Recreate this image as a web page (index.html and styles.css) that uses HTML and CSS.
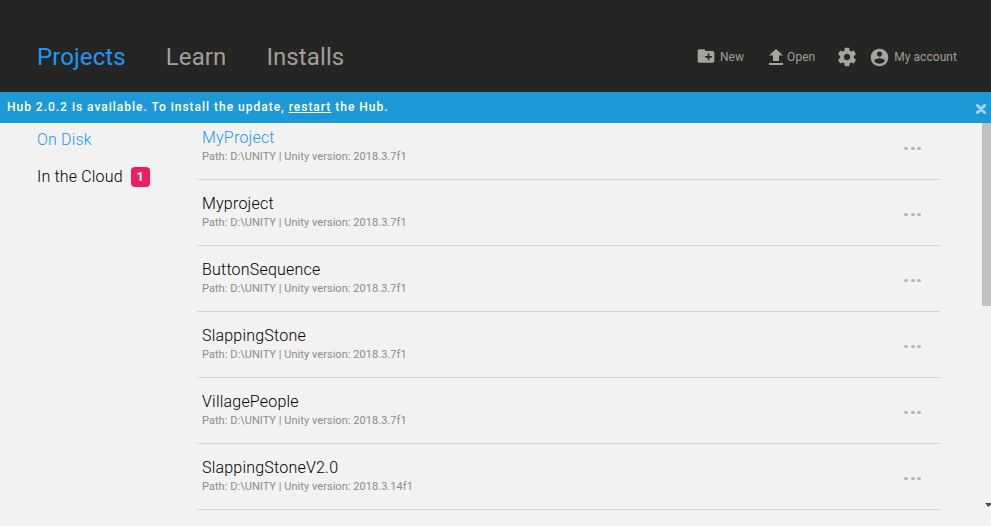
FILE: index.html
```html
<!DOCTYPE html>
<html lang="en">
<head>
<meta charset="utf-8">
<title>Unity Hub</title>
<link rel="stylesheet" href="styles.css">
</head>
<body>
<header class="topbar">
  <nav class="tabs">
    <a class="tab active">Projects</a>
    <a class="tab">Learn</a>
    <a class="tab">Installs</a>
  </nav>
  <div class="actions">
    <a class="action new"><svg width="20" height="20" viewBox="0 0 24 24"><path d="M20 6h-8l-2-2H4c-1.110 0-1.990.89-1.990 2L2 18c0 1.110.89 2 2 2h16c1.110 0 2-.89 2-2V8c0-1.110-.89-2-2-2zm-1 8h-3v3h-2v-3h-3v-2h3V9h2v3h3v2z"/></svg><span>New</span></a>
    <a class="action open"><svg width="14" height="16" viewBox="0 0 14 16"><path d="M4 12h6V6.500h4L7 0 0 6.500h4zM0 14h14v2H0z"/></svg><span>Open</span></a>
    <a class="action settings"><svg width="22" height="22" viewBox="0 0 24 24"><path d="M19.430 12.980c.04-.32.07-.64.07-.98s-.03-.66-.07-.98l2.110-1.650c.19-.15.24-.42.12-.64l-2-3.460c-.12-.22-.39-.3-.61-.22l-2.490 1c-.52-.4-1.080-.73-1.690-.98l-.38-2.650C14.460 2.180 14.250 2 14 2h-4c-.25 0-.46.18-.49.42l-.38 2.650c-.61.25-1.170.59-1.690.98l-2.490-1c-.23-.09-.49 0-.61.22l-2 3.460c-.13.22-.07.49.12.64l2.110 1.650c-.04.32-.07.65-.07.98s.03.66.07.98l-2.110 1.650c-.19.15-.24.42-.12.64l2 3.460c.12.22.39.3.61.22l2.490-1c.52.4 1.080.73 1.690.98l.38 2.650c.03.24.24.42.49.42h4c.25 0 .46-.18.49-.42l.38-2.650c.61-.25 1.170-.59 1.690-.98l2.490 1c.23.09.49 0 .61-.22l2-3.460c.12-.22.07-.49-.12-.64l-2.110-1.650zM12 15.500c-1.930 0-3.500-1.570-3.500-3.500s1.570-3.500 3.500-3.500 3.500 1.570 3.500 3.500-1.570 3.500-3.500 3.500z"/></svg></a>
    <a class="action account"><svg width="21" height="21" viewBox="0 0 24 24"><path d="M12 2C6.480 2 2 6.480 2 12s4.480 10 10 10 10-4.480 10-10S17.520 2 12 2zm0 3c1.660 0 3 1.340 3 3s-1.340 3-3 3-3-1.340-3-3 1.340-3 3-3zm0 14.200c-2.500 0-4.710-1.280-6-3.220.03-1.990 4-3.080 6-3.080 1.990 0 5.970 1.090 6 3.080-1.290 1.940-3.500 3.220-6 3.220z"/></svg><span>My account</span></a>
  </div>
</header>
<div class="banner">
  <span>Hub 2.0.2 is available. To install the update, <a class="restart">restart</a> the Hub.</span>
  <svg class="close" width="10" height="10" viewBox="0 0 10 10"><path d="M1.500 1.500l7 7M8.500 1.500l-7 7"/></svg>
</div>
<main class="content">
  <aside class="sidebar">
    <a class="side active">On Disk</a>
    <a class="side">In the Cloud<span class="badge">1</span></a>
  </aside>
  <section class="viewport">
    <div class="list">
      <article class="row"><div><h2 class="name current">MyProject</h2><p class="path">Path: D:\UNITY | Unity version: 2018.3.7f1</p></div><span class="more"><i></i><i></i><i></i></span></article>
      <article class="row"><div><h2 class="name">Myproject</h2><p class="path">Path: D:\UNITY | Unity version: 2018.3.7f1</p></div><span class="more"><i></i><i></i><i></i></span></article>
      <article class="row"><div><h2 class="name">ButtonSequence</h2><p class="path">Path: D:\UNITY | Unity version: 2018.3.7f1</p></div><span class="more"><i></i><i></i><i></i></span></article>
      <article class="row"><div><h2 class="name">SlappingStone</h2><p class="path">Path: D:\UNITY | Unity version: 2018.3.7f1</p></div><span class="more"><i></i><i></i><i></i></span></article>
      <article class="row"><div><h2 class="name">VillagePeople</h2><p class="path">Path: D:\UNITY | Unity version: 2018.3.7f1</p></div><span class="more"><i></i><i></i><i></i></span></article>
      <article class="row"><div><h2 class="name">SlappingStoneV2.0</h2><p class="path">Path: D:\UNITY | Unity version: 2018.3.14f1</p></div><span class="more"><i></i><i></i><i></i></span></article>
    </div>
  </section>
  <div class="scrollbar"><div class="thumb"></div><svg class="down" width="7" height="4" viewBox="0 0 7 4"><path d="M0 0h7L3.500 4z"/></svg></div>
</main>
</body>
</html>
```
FILE: styles.css
```css
* { box-sizing: border-box; }
body {
  margin: 0;
  width: 991px;
  height: 526px;
  overflow: hidden;
  display: flex;
  flex-direction: column;
  background: #f2f2f2;
  font-family: Roboto, "Liberation Sans", sans-serif;
}
.topbar {
  flex: none;
  height: 92px;
  padding: 22px 34px 0 37px;
  display: flex;
  justify-content: space-between;
  align-items: center;
  background: #252523;
  color: #a09f9d;
}
.tabs { display: flex; gap: 40px; }
.tab { font-size: 24px; line-height: 32px; letter-spacing: 0.1px; white-space: nowrap; }
.tab.active { color: #2196f3; }
.actions { display: flex; align-items: center; height: 24px; }
.action { display: flex; align-items: center; font-size: 12px; letter-spacing: 0.05px; white-space: nowrap; }
.action svg { flex: none; fill: #a5a4a1; }
.new { gap: 4px; }
.new svg { margin-top: -2px; }
.open { gap: 4px; margin-left: 25px; }
.open svg { margin-top: -1px; }
.settings { margin-left: 21px; }
.account { gap: 4px; margin-left: 11px; }
.banner {
  flex: none;
  height: 31px;
  padding: 0 5px 0 7px;
  display: flex;
  align-items: center;
  justify-content: space-between;
  background: #1e99d7;
  color: #fff;
  font-size: 12px;
  font-weight: 500;
  letter-spacing: 0.985px;
}
.banner span { padding-bottom: 2px; }
.restart { text-decoration: underline; }
.close { margin-top: 2px; fill: none; stroke: #a9d3f4; stroke-width: 3; stroke-linecap: round; }
.content { flex: 1; min-height: 0; display: flex; }
.sidebar {
  width: 197px;
  padding: 6px 0 0 37px;
  display: flex;
  flex-direction: column;
  gap: 17px;
}
.side {
  display: flex;
  align-items: center;
  height: 20px;
  color: #000;
  font-size: 16px;
  font-weight: 300;
  letter-spacing: 0.17px;
}
.side.active { color: #2196f3; }
.badge {
  width: 19px;
  height: 20px;
  margin: 1px 0 -1px 8px;
  border-radius: 4px;
  background: #e91e63;
  color: #fff;
  font-size: 12px;
  font-weight: 700;
  line-height: 20px;
  text-align: center;
}
.viewport { width: 743px; height: 387px; overflow: hidden; }
.list { margin-top: -9px; }
.row {
  height: 66px;
  padding: 13px 19px 0 5px;
  display: flex;
  justify-content: space-between;
  border-bottom: 1px solid #d3d3d3;
}
.name { margin: 0; color: #000; font-size: 16px; font-weight: 300; line-height: 21px; letter-spacing: 0.21px; }
.name.current { color: #2196f3; }
.path { margin: 2px 0 0; color: #8b8b8b; font-size: 11px; line-height: 14px; letter-spacing: 0.045px; }
.more { display: flex; gap: 2.500px; height: 3px; margin-top: 20px; }
.more i { width: 4px; height: 3px; border-radius: 1.5px; background: #b8b6b4; }
.scrollbar {
  width: 11px;
  height: 387px;
  margin-left: 40px;
  display: flex;
  flex-direction: column;
  justify-content: space-between;
}
.thumb { width: 9px; height: 183px; margin-left: 2px; background: #c1c1c1; }
.down { margin: 0 -1px 3px 5px; fill: #4f4642; }
```
